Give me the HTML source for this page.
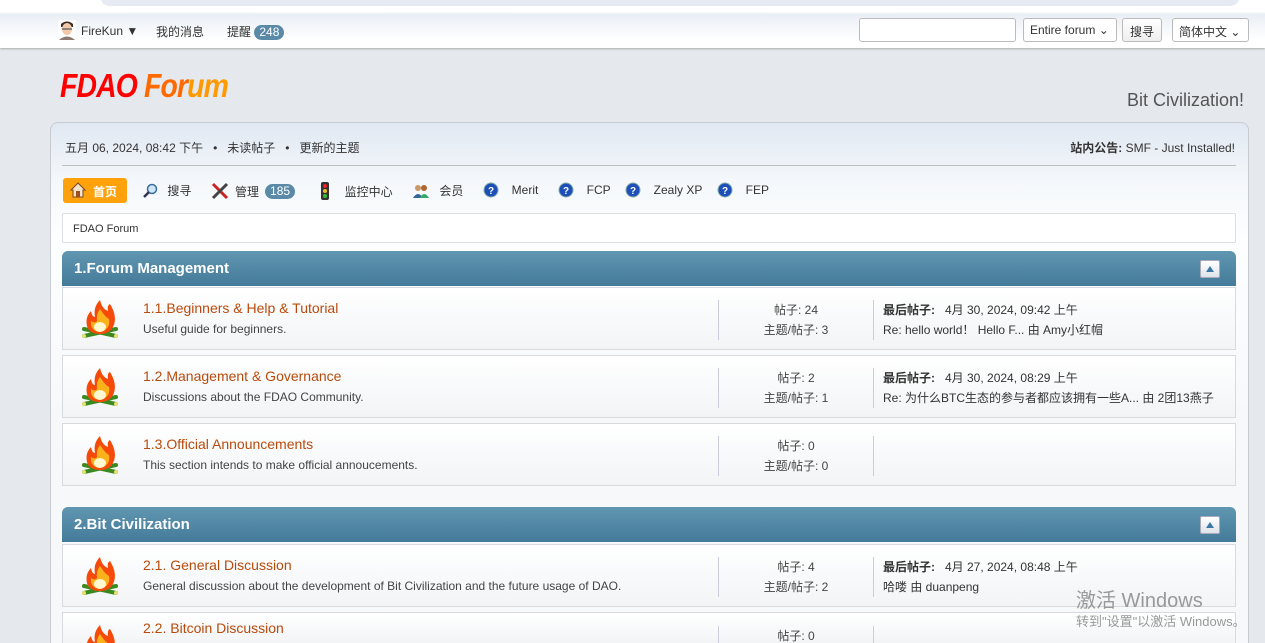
<!DOCTYPE html>
<html><head><meta charset="utf-8">
<style>
*{box-sizing:border-box;margin:0;padding:0}
html,body{width:1265px;height:643px;overflow:hidden}
body{background:#e5e9ee;font-family:"Liberation Sans","Noto Sans CJK SC",sans-serif;font-size:12px;color:#333;position:relative}
.top{position:absolute;left:0;top:0;width:1265px;height:48px;background:linear-gradient(#fff 0,#fff 12px,#e9eef5 14px,#fff 40px);box-shadow:0 1px 2px #aaa}
.pill{position:absolute;left:100px;top:-10px;width:1140px;height:16px;background:#e6ebf3;border-radius:0 0 10px 10px}
.t{position:absolute;font-size:12px;color:#333;white-space:nowrap}
.badge{display:inline-block;background:#5a8aa8;color:#fff;border-radius:8px;padding:0 5px;font-size:12px;line-height:15px}
.inp{position:absolute;top:18px;height:24px;border:1px solid #bbb;border-radius:3px;background:#fff;font-size:12px;padding:4px 6px;white-space:nowrap;overflow:hidden}
.main{position:absolute;left:50px;top:122px;width:1199px;height:521px;border:1px solid #c8ccd2;border-bottom:none;border-radius:8px 8px 0 0;background:linear-gradient(#e0e8f2 0,#f5f8fb 60px,#fdfeff 120px,#f7f8fa 300px)}
.hr{position:absolute;left:62px;top:165px;width:1174px;height:1px;background:#bcc0c4}
.nav{position:absolute;top:182px;font-size:12px;color:#333;display:flex;align-items:center;gap:6px;white-space:nowrap}
.crumb{position:absolute;left:62px;top:213px;width:1174px;height:30px;border:1px solid #dcdfe3;background:#fff;border-radius:2px;padding:9px 10px;font-size:11px}
.cat{position:absolute;left:62px;width:1174px;height:35px;border-radius:6px 6px 0 0;background:linear-gradient(#6096b0,#447b9a);color:#fff;font-weight:bold;font-size:15px;padding:9px 12px}
.cat .up{position:absolute;right:16px;top:9px;width:20px;height:18px;background:linear-gradient(#fff,#dfe3e8);border:1px solid #aab;border-radius:2px}
.cat .up:after{content:"";position:absolute;left:5px;top:5px;border-left:4px solid transparent;border-right:4px solid transparent;border-bottom:6px solid #3b78a8}
.row{position:absolute;left:62px;width:1174px;height:63px;border:1px solid #d7dadf;background:linear-gradient(#fff,#f2f4f6);overflow:hidden}
.row svg{position:absolute;left:17px;top:12px}
.row .ti{position:absolute;left:80px;top:12px;font-size:14px;color:#b84a0c;white-space:nowrap}
.row .de{position:absolute;left:80px;top:34px;font-size:12px;color:#444;white-space:nowrap}
.row .st{position:absolute;left:655px;top:12px;width:156px;height:40px;border-left:1px solid #ccd;border-right:1px solid #ccd;text-align:center;font-size:12px;line-height:20px;color:#444}
.row .lp{position:absolute;left:820px;top:12px;font-size:12px;line-height:20px;color:#333;white-space:nowrap}
</style></head><body>
<div class="top"><div class="pill"></div></div>
<svg style="position:absolute;left:58px;top:20px" width="18" height="20" viewBox="0 0 18 20"><rect width="18" height="20" fill="#fff"/><path d="M3 4 Q9 -1 15 4 L15 7 L3 7Z" fill="#3a2a22"/><ellipse cx="9" cy="9" rx="5" ry="6" fill="#f1c8a8"/><rect x="4" y="8" width="10" height="2" fill="#555" opacity=".6"/><path d="M1 20 Q9 13 17 20Z" fill="#8a7a70"/></svg>
<div class="t" style="left:81px;top:24px">FireKun ▼</div>
<div class="t" style="left:156px;top:23px">我的消息</div>
<div class="t" style="left:227px;top:23px">提醒 <span class="badge">248</span></div>
<div class="inp" style="left:859px;width:157px"></div>
<div class="inp" style="left:1023px;width:94px">Entire forum ⌄</div>
<div class="inp" style="left:1122px;width:40px;background:linear-gradient(#fff,#eee);padding:4px 7px">搜寻</div>
<div class="inp" style="left:1172px;width:77px;padding:4px 6px">简体中文 ⌄</div>

<div style="position:absolute;left:60px;top:67px;font-size:33px;font-weight:bold;font-style:italic;letter-spacing:-1px;font-family:'Liberation Sans',sans-serif;transform:scaleX(.86);transform-origin:left;white-space:nowrap"><span style="color:#f00">FDAO </span><span style="color:#ff6a00">For</span><span style="color:#ff9900">um</span></div>
<div style="position:absolute;right:21px;top:90px;font-size:18px;color:#555">Bit Civilization!</div>

<div class="main"></div>
<div class="t" style="left:65px;top:139px">五月 06, 2024, 08:42 下午 &nbsp; • &nbsp; 未读帖子 &nbsp; • &nbsp; 更新的主题</div>
<div class="t" style="right:30px;top:139px"><b>站内公告:</b> SMF - Just Installed!</div>
<div class="hr"></div>

<div style="position:absolute;left:63px;top:178px;width:64px;height:25px;background:#fea10a;border-radius:3px;color:#fff;font-weight:bold;padding:5px 0 0 30px;font-size:12px">首页</div>
<svg style="position:absolute;left:70px;top:182px" width="16" height="16"><path d="M1 8 L8 1 L15 8 L13 8 L13 15 L3 15 L3 8Z" fill="#f4e3c8" stroke="#7a4a20"/><rect x="6" y="9" width="4" height="6" fill="#a05020"/></svg>
<div class="nav" style="left:142px"><svg width="16" height="16"><circle cx="10" cy="6" r="4.5" fill="#cfe6f8" stroke="#3a6e9a" stroke-width="1.5"/><path d="M7 9 L2 14" stroke="#335" stroke-width="2.5"/></svg>&nbsp;搜寻</div>
<div class="nav" style="left:211px"><svg width="18" height="18"><path d="M2 2 L16 16" stroke="#c22" stroke-width="3"/><path d="M16 2 L2 16" stroke="#444" stroke-width="3"/></svg> 管理 <span class="badge">185</span></div>
<div class="nav" style="left:318px"><svg width="14" height="18"><rect x="3" y="0" width="8" height="18" rx="2" fill="#333"/><circle cx="7" cy="4" r="2" fill="#e22"/><circle cx="7" cy="9" r="2" fill="#eb2"/><circle cx="7" cy="14" r="2" fill="#3b3"/></svg>&nbsp;&nbsp;监控中心</div>
<div class="nav" style="left:412px"><svg width="18" height="16"><circle cx="6" cy="5" r="3" fill="#c96"/><path d="M1 15 Q6 7 11 15Z" fill="#369"/><circle cx="12" cy="5" r="3" fill="#a63"/><path d="M8 15 Q12 7 17 15Z" fill="#3a6"/></svg>&nbsp;会员</div>
<div class="nav" style="left:483px"><svg width="16" height="16"><circle cx="8" cy="8" r="7" fill="#1d4fb8" stroke="#8aa" /><text x="8" y="12" font-size="10" fill="#fff" text-anchor="middle" font-weight="bold" font-family="Liberation Sans">?</text></svg>&nbsp;&nbsp;Merit</div>
<div class="nav" style="left:558px"><svg width="16" height="16"><circle cx="8" cy="8" r="7" fill="#1d4fb8" stroke="#8aa"/><text x="8" y="12" font-size="10" fill="#fff" text-anchor="middle" font-weight="bold" font-family="Liberation Sans">?</text></svg>&nbsp;&nbsp;FCP</div>
<div class="nav" style="left:625px"><svg width="16" height="16"><circle cx="8" cy="8" r="7" fill="#1d4fb8" stroke="#8aa"/><text x="8" y="12" font-size="10" fill="#fff" text-anchor="middle" font-weight="bold" font-family="Liberation Sans">?</text></svg>&nbsp;&nbsp;Zealy XP</div>
<div class="nav" style="left:717px"><svg width="16" height="16"><circle cx="8" cy="8" r="7" fill="#1d4fb8" stroke="#8aa"/><text x="8" y="12" font-size="10" fill="#fff" text-anchor="middle" font-weight="bold" font-family="Liberation Sans">?</text></svg>&nbsp;&nbsp;FEP</div>

<div class="crumb">FDAO Forum</div>

<svg width="0" height="0" style="position:absolute"><defs><g id="fire"><path d="M4 36 L36 29 M4 29 L36 36" stroke="#3a8a20" stroke-width="4" stroke-linecap="round"/><circle cx="4" cy="36" r="2" fill="#e8e070"/><circle cx="36" cy="36" r="2" fill="#e8e070"/><path d="M20 0 Q22 9 28 11 Q27 5 30 4 Q38 17 33 27 Q29 34 20 34 Q9 34 7 26 Q5 17 11 11 Q12 17 15 17 Q13 7 20 0Z" fill="#f54a0a"/><path d="M20 9 Q25 17 29 19 Q31 29 20 32 Q10 31 11 21 Q15 24 17 21 Q16 14 20 9Z" fill="#fbb21a"/><ellipse cx="20" cy="27" rx="6" ry="5" fill="#fff8d0"/></g></defs></svg>

<div class="cat" style="top:251px">1.Forum Management<div class="up"></div></div>
<div class="row" style="top:287px"><svg width="40" height="40"><use href="#fire"/></svg><div class="ti">1.1.Beginners &amp; Help &amp; Tutorial</div><div class="de">Useful guide for beginners.</div><div class="st">帖子: 24<br>主题/帖子: 3</div><div class="lp"><b>最后帖子:</b>&nbsp;&nbsp; 4月 30, 2024, 09:42 上午<br>Re: hello world！ Hello F... 由 Amy小红帽</div></div>
<div class="row" style="top:355px"><svg width="40" height="40"><use href="#fire"/></svg><div class="ti">1.2.Management &amp; Governance</div><div class="de">Discussions about the FDAO Community.</div><div class="st">帖子: 2<br>主题/帖子: 1</div><div class="lp"><b>最后帖子:</b>&nbsp;&nbsp; 4月 30, 2024, 08:29 上午<br>Re: 为什么BTC生态的参与者都应该拥有一些A... 由 2团13燕子</div></div>
<div class="row" style="top:423px"><svg width="40" height="40"><use href="#fire"/></svg><div class="ti">1.3.Official Announcements</div><div class="de">This section intends to make official annoucements.</div><div class="st">帖子: 0<br>主题/帖子: 0</div></div>

<div class="cat" style="top:507px">2.Bit Civilization<div class="up"></div></div>
<div class="row" style="top:544px"><svg width="40" height="40"><use href="#fire"/></svg><div class="ti">2.1. General Discussion</div><div class="de">General discussion about the development of Bit Civilization and the future usage of DAO.</div><div class="st">帖子: 4<br>主题/帖子: 2</div><div class="lp"><b>最后帖子:</b>&nbsp;&nbsp; 4月 27, 2024, 08:48 上午<br>哈喽 由 duanpeng</div></div>
<div class="row" style="top:612px;height:31px;border-bottom:none"><svg width="40" height="40"><use href="#fire"/></svg><div class="ti" style="top:7px">2.2. Bitcoin Discussion</div><div class="st" style="top:13px">帖子: 0</div></div>

<div style="position:absolute;left:1076px;top:584px;font-size:20px;color:#999;white-space:nowrap">激活 Windows</div>
<div style="position:absolute;left:1076px;top:611px;font-size:13px;color:#999;white-space:nowrap">转到"设置"以激活 Windows。</div>
</body></html>
